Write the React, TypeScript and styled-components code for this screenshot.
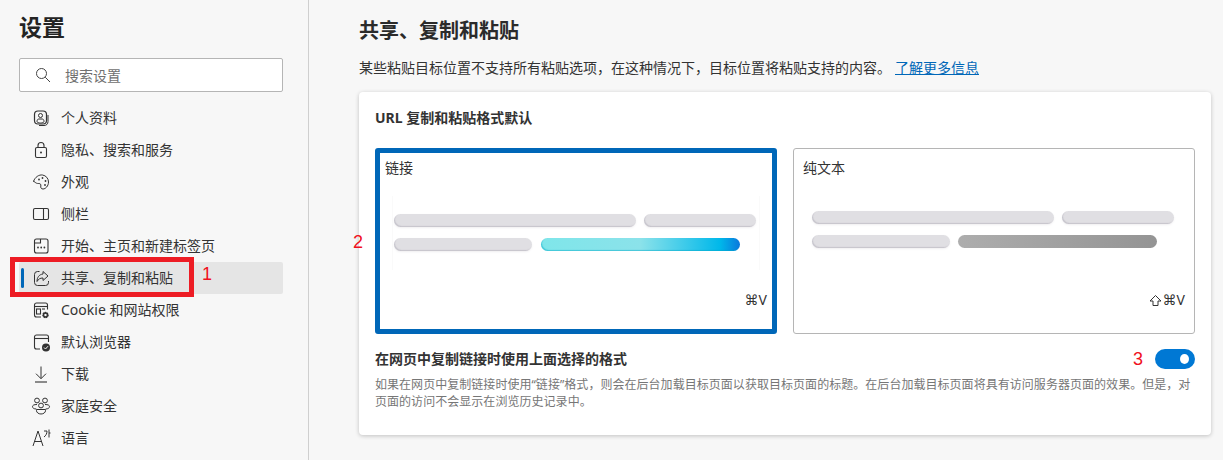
import React from 'react';
import styled, { createGlobalStyle } from 'styled-components';

const GlobalStyle = createGlobalStyle`
    html, body {
        margin: 0;
        padding: 0;
        background: #f7f7f7;
        color: #2b2b2b;
        font-family: "Noto Sans", "Noto Sans CJK SC", "DejaVu Sans", sans-serif;
    }
`;

const Icon = ({ children }: { children: React.ReactNode }) => (
    <IconSvg viewBox="0 0 20 20" fill="none" stroke="#333" strokeWidth="1">
        {children}
    </IconSvg>
);

const navItems: { label: string; icon: React.ReactNode; active?: boolean }[] = [
    {
        label: '个人资料',
        icon: (
            <>
                <rect x="3.5" y="3" width="12" height="13" rx="3.5" strokeWidth="1.2" />
                <circle cx="9.5" cy="7.5" r="2" />
                <path d="M6 13.5c0-2 1-2.5 2-2.5h3c1 0 2 .5 2 2.5s-7 2-7 0z" />
                <path d="M17 7v6.5c0 2.5-1.5 4-4 4H8" />
            </>
        ),
    },
    {
        label: '隐私、搜索和服务',
        icon: (
            <>
                <rect x="4.5" y="7.5" width="11" height="10" rx="1.5" strokeWidth="1.1" />
                <path d="M7 7.5V5.5a3 3 0 0 1 6 0v2" strokeWidth="1.1" />
                <circle cx="10" cy="12.5" r="1" fill="#333" stroke="none" />
            </>
        ),
    },
    {
        label: '外观',
        icon: (
            <>
                <path d="M2.5 9.5C4 5 8 2.5 11.5 3c3.5.5 6 3.5 6 7 0 4-3 7-5.5 7-2 0-2.5-1.5-2.2-3 .3-1.5-.3-2.5-2-2.5-1.8 0-2.5 0-5.3-2.5z" />
                <circle cx="8" cy="7.5" r=".9" fill="#333" stroke="none" />
                <circle cx="11.5" cy="6" r=".9" fill="#333" stroke="none" />
                <circle cx="14.5" cy="9" r=".9" fill="#333" stroke="none" />
                <circle cx="14" cy="13" r=".9" fill="#333" stroke="none" />
            </>
        ),
    },
    {
        label: '侧栏',
        icon: (
            <>
                <rect x="2.5" y="4.5" width="15" height="11" rx="1.5" strokeWidth="1.1" />
                <path d="M12.5 4.5v11" strokeWidth="1.1" />
            </>
        ),
    },
    {
        label: '开始、主页和新建标签页',
        icon: (
            <>
                <rect x="3.5" y="3" width="13.5" height="14" rx="2" strokeWidth="1.1" />
                <path d="M3.5 7h6V3" strokeWidth="1.1" />
                <circle cx="7" cy="11.5" r=".9" fill="#333" stroke="none" />
                <circle cx="10.2" cy="11.5" r=".9" fill="#333" stroke="none" />
                <circle cx="13.4" cy="11.5" r=".9" fill="#333" stroke="none" />
            </>
        ),
    },
    {
        label: '共享、复制和粘贴',
        active: true,
        icon: (
            <>
                <path d="M8.5 3.5h-2a3 3 0 0 0-3 3v8a3 3 0 0 0 3 3h8a3 3 0 0 0 3-3V13" />
                <path d="M12 3.5L17 8l-5 4.5V10c-3 0-4.5 1-6 3.5 0-4 2-7 6-7.5z" />
            </>
        ),
    },
    {
        label: 'Cookie 和网站权限',
        icon: (
            <>
                <path d="M10 17H5.5a2 2 0 0 1-2-2V5a2 2 0 0 1 2-2h9a2 2 0 0 1 2 2v4.500" strokeWidth="1.1" />
                <path d="M3.5 6.5h13" strokeWidth="1.1" />
                <rect x="5.5" y="9" width="4" height="5" strokeWidth="1.1" />
                <path d="M11 9h3" strokeWidth="1.1" />
                <circle cx="14.5" cy="15" r="2.3" strokeWidth="1.8" strokeDasharray="1.3 .5" />
                <circle cx="14.5" cy="15" r="2" strokeWidth="1.4" />
            </>
        ),
    },
    {
        label: '默认浏览器',
        icon: (
            <>
                <path d="M9 17H5.5a2 2 0 0 1-2-2V5a2 2 0 0 1 2-2h10a2 2 0 0 1 2 2v5" strokeWidth="1.1" />
                <path d="M3.5 6.5h14" strokeWidth="1.1" />
                <circle cx="15" cy="15.5" r="4" fill="#333" stroke="none" />
                <path d="M13 15.5l1.5 1.5 2.5-2.8" stroke="#f7f7f7" />
            </>
        ),
    },
    {
        label: '下载',
        icon: (
            <>
                <path d="M10 2.5v12M5 9.7l5 5 5-5" />
                <path d="M4 18h12" strokeWidth="1.1" />
            </>
        ),
    },
    {
        label: '家庭安全',
        icon: (
            <>
                <circle cx="6" cy="4.5" r="2.4" />
                <circle cx="14" cy="4.5" r="2.4" />
                <circle cx="10" cy="9.5" r="2.4" />
                <path d="M6 8.500c-3 0-4.500.7-4.500 2.200 0 1.300 1.500 2.300 3.800 2.300" />
                <path d="M14 8.500c3 0 4.500.7 4.500 2.200 0 1.300-1.500 2.300-3.800 2.300" />
                <path d="M5.5 13.5h9v1.200c0 1.800-2 3.300-4.500 3.300s-4.500-1.500-4.500-3.300z" />
            </>
        ),
    },
    {
        label: '语言',
        icon: (
            <>
                <path d="M2 18L7 3l5 15M3.500 13.500h7" />
                <path d="M13 3h3c0 2.500-1 4.500-3 6M18 1.500v8M18 5h1.500" />
            </>
        ),
    },
];

const Preview = ({ selected }: { selected?: boolean }) => (
    <PreviewBox $selected={selected}>
        <BarRow>
            <Bar $width={242} />
            <Bar $width={112} />
        </BarRow>
        <BarRow>
            <Bar $width={138} />
            <Bar $width={199} $kind={selected ? 'link' : 'text'} />
        </BarRow>
    </PreviewBox>
);

export default function App() {
    return (
        <Page>
            <GlobalStyle />
            <Sidebar>
                <SideTitle>设置</SideTitle>
                <SearchBox>
                    <svg width="16" height="16" viewBox="0 0 16 16" fill="none" stroke="#444" strokeWidth="1">
                        <circle cx="6.5" cy="6.5" r="5" />
                        <path d="M10.2 10.2l4.800 4.800" />
                    </svg>
                    <SearchText>搜索设置</SearchText>
                </SearchBox>
                <Nav>
                    {navItems.map((item) => (
                        <NavRow key={item.label} $active={item.active}>
                            <Icon>{item.icon}</Icon>
                            <NavLabel>{item.label}</NavLabel>
                        </NavRow>
                    ))}
                </Nav>
            </Sidebar>

            <Main>
                <PageTitle>共享、复制和粘贴</PageTitle>
                <Intro>
                    某些粘贴目标位置不支持所有粘贴选项，在这种情况下，目标位置将粘贴支持的内容。
                    <MoreLink href="#">了解更多信息</MoreLink>
                </Intro>
                <Card>
                    <CardTitle>URL 复制和粘贴格式默认</CardTitle>
                    <Options>
                        <Option $selected>
                            <OptionLabel>链接</OptionLabel>
                            <Preview selected />
                            <Shortcut>⌘V</Shortcut>
                        </Option>
                        <Option>
                            <OptionLabel>纯文本</OptionLabel>
                            <Preview />
                            <Shortcut>
                                <ShiftIcon viewBox="0 0 13 13" fill="none" stroke="#333" strokeWidth="1">
                                    <path d="M6.5 1.500L12 7H9v4.500H4V7H1z" />
                                </ShiftIcon>
                                ⌘V
                            </Shortcut>
                        </Option>
                    </Options>
                    <ToggleRow>
                        <ToggleLabel>在网页中复制链接时使用上面选择的格式</ToggleLabel>
                        <Toggle />
                    </ToggleRow>
                    <Description>
                        如果在网页中复制链接时使用“链接”格式，则会在后台加载目标页面以获取目标页面的标题。在后台加载目标页面将具有访问服务器页面的效果。但是，对页面的访问不会显示在浏览历史记录中。
                    </Description>
                </Card>
            </Main>

            <Highlight />
            <Marker $x={202} $y={263}>1</Marker>
            <Marker $x={353} $y={231}>2</Marker>
            <Marker $x={1133} $y={348}>3</Marker>
        </Page>
    );
}

const Page = styled.div`
    position: relative;
    display: flex;
    width: 1223px;
    height: 460px;
    overflow: hidden;
`;

const Sidebar = styled.aside`
    box-sizing: border-box;
    flex: 0 0 309px;
    padding: 0 25px 0 19px;
    border-right: 1px solid #cfcfcf;
`;

const SideTitle = styled.h1`
    margin: 0;
    height: 58px;
    font-size: 23px;
    font-weight: 700;
    line-height: 55px;
    color: #242424;
`;

const SearchBox = styled.div`
    box-sizing: border-box;
    display: flex;
    align-items: center;
    gap: 14px;
    height: 34px;
    padding: 0 0 1px 15px;
    background: #fff;
    border: 1px solid #b5b5b5;
    border-radius: 2px;
`;

const SearchText = styled.span`
    font-size: 14px;
    color: #707070;
`;

const Nav = styled.nav`
    margin-top: 10px;
`;

const NavRow = styled.div<{ $active?: boolean }>`
    position: relative;
    display: flex;
    align-items: center;
    gap: 10px;
    height: 32px;
    padding-left: 12px;
    border-radius: 2px;
    background: ${(p) => (p.$active ? '#e5e5e5' : 'transparent')};

    &::before {
        content: "";
        display: ${(p) => (p.$active ? 'block' : 'none')};
        position: absolute;
        left: 2px;
        top: 6px;
        width: 3px;
        height: 20px;
        border-radius: 2px;
        background: #0067b8;
    }
`;

const NavLabel = styled.span`
    margin-bottom: 2px;
    font-size: 14px;
    color: #333;
`;

const IconSvg = styled.svg`
    flex: none;
    width: 20px;
    height: 20px;
`;

const Main = styled.main`
    flex: 1;
    padding: 0 12px 0 50px;
`;

const PageTitle = styled.h2`
    margin: 0;
    height: 58px;
    padding-top: 17px;
    box-sizing: border-box;
    font-size: 20px;
    font-weight: 700;
    line-height: 28px;
    color: #2b2b2b;
`;

const Intro = styled.p`
    margin: 0 0 14px;
    height: 20px;
    font-size: 14px;
    line-height: 20px;
    color: #333;
`;

const MoreLink = styled.a`
    margin-left: 4px;
    color: #0067b8;
`;

const Card = styled.section`
    box-sizing: border-box;
    height: 343px;
    padding: 0 16px;
    background: #fff;
    border-radius: 4px;
    box-shadow: 0 1px 4px rgba(0, 0, 0, 0.22);
`;

const CardTitle = styled.h3`
    margin: 0;
    height: 56px;
    font-size: 14px;
    font-weight: 700;
    line-height: 52px;
    color: #333;
`;

const Options = styled.div`
    display: grid;
    grid-template-columns: 402px 402px;
    gap: 16px;
`;

const Option = styled.div<{ $selected?: boolean }>`
    box-sizing: border-box;
    display: flex;
    flex-direction: column;
    height: 186px;
    padding: ${(p) => (p.$selected ? '5px' : '9px')};
    border: ${(p) => (p.$selected ? '5px solid #0067b8' : '1px solid #b5b5b5')};
    border-radius: 3px;
`;

const OptionLabel = styled.div`
    font-size: 14px;
    line-height: 20px;
    color: #333;
`;

const PreviewBox = styled.div<{ $selected?: boolean }>`
    position: relative;
    display: flex;
    flex-direction: column;
    gap: 11px;
    margin: ${(p) => (p.$selected ? '36px 0 0 9px' : '33px 0 0 9px')};

    &::before {
        content: "";
        display: ${(p) => (p.$selected ? 'block' : 'none')};
        position: absolute;
        left: -2px;
        top: -18px;
        width: 366px;
        height: 74px;
        border-left: 1px solid #fafafa;
        border-right: 1px solid #fafafa;
    }
`;

const BarRow = styled.div`
    position: relative;
    display: flex;
    gap: 8px;
`;

const barFill: Record<string, string> = {
    plain: '#e0dfe3',
    link: 'linear-gradient(90deg, #7fe6ea 0%, #8be2ea 50%, #00b8ea 90%, #0a78dc 100%)',
    text: 'linear-gradient(90deg, #adadad, #949494)',
};

const Bar = styled.div<{ $width: number; $kind?: string }>`
    width: ${(p) => p.$width}px;
    height: 13px;
    margin-left: ${(p) => (p.$kind === 'link' ? '1px' : '0')};
    border-radius: 7px;
    background: ${(p) => barFill[p.$kind || 'plain']};
    box-shadow: ${(p) => {
        if (p.$kind === 'text') return 'none';
        if (p.$kind === 'link') return 'inset 1px -1px 1px rgba(0, 170, 200, 0.5)';
        return 'inset 1px -1px 1px rgba(120, 115, 135, 0.25), 0 1px 2px rgba(120, 115, 135, 0.12)';
    }};
`;

const Shortcut = styled.div`
    display: flex;
    align-items: center;
    justify-content: flex-end;
    margin-top: auto;
    margin-bottom: 15px;
    font-family: "Noto Sans", "DejaVu Sans", sans-serif;
    font-size: 14px;
    line-height: 18px;
    color: #333;
`;

const ShiftIcon = styled.svg`
    width: 13px;
    height: 13px;
    margin-right: 1px;
`;

const ToggleRow = styled.div`
    display: flex;
    align-items: center;
    justify-content: space-between;
    height: 20px;
    margin-top: 15px;
`;

const ToggleLabel = styled.div`
    margin-bottom: 2px;
    font-size: 14px;
    font-weight: 700;
    color: #333;
`;

const Toggle = styled.div`
    position: relative;
    width: 40px;
    height: 20px;
    border-radius: 10px;
    background: #0078d4;

    &::after {
        content: "";
        position: absolute;
        right: 6px;
        top: 5px;
        width: 9px;
        height: 10px;
        border-radius: 50%;
        background: #fff;
    }
`;

const Description = styled.p`
    margin: 7px 0 0;
    font-size: 12px;
    line-height: 17px;
    letter-spacing: 0.04px;
    color: #767676;
`;

const Highlight = styled.div`
    position: absolute;
    left: 10px;
    top: 257px;
    width: 184px;
    height: 40px;
    box-sizing: border-box;
    border: 5px solid #ed1c24;
`;

const Marker = styled.div<{ $x: number; $y: number }>`
    position: absolute;
    left: ${(p) => p.$x}px;
    top: ${(p) => p.$y}px;
    font-family: "Liberation Sans", sans-serif;
    font-size: 18px;
    line-height: 22px;
    color: #f01020;
`;
